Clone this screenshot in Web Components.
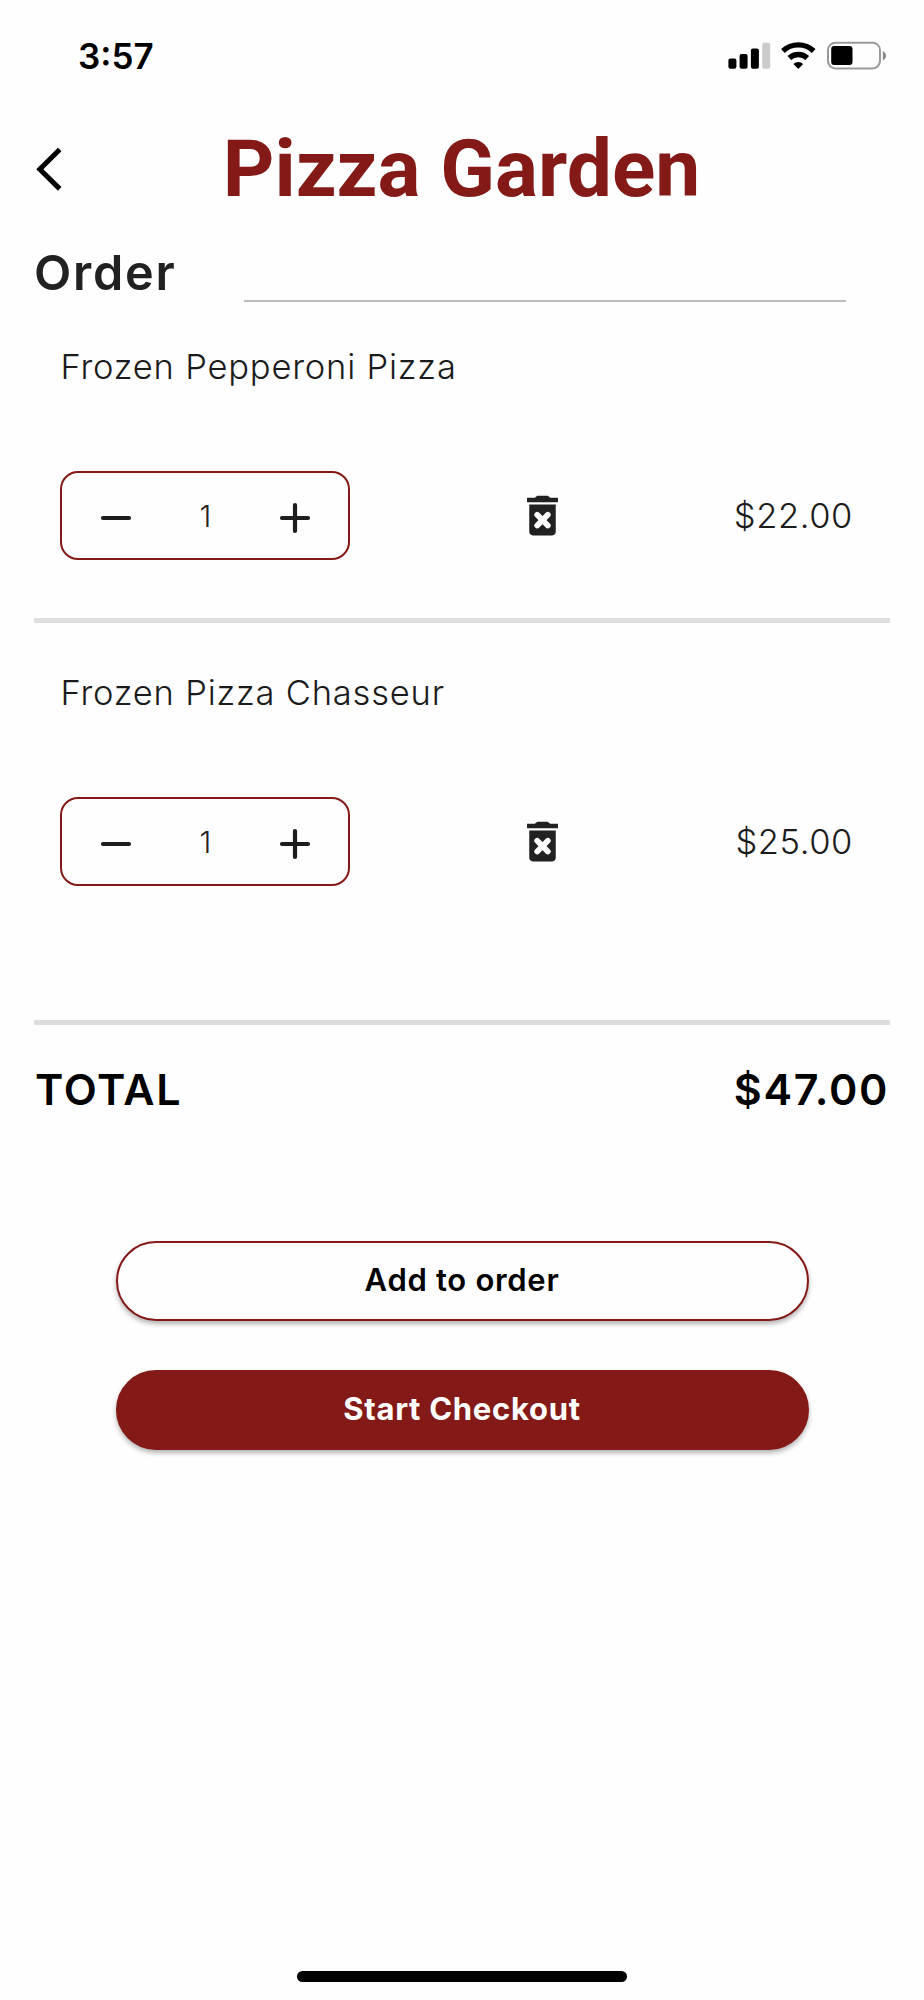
<!DOCTYPE html>
<html lang="en">
<head>
<meta charset="UTF-8">
<title>Pizza Garden</title>
<style>
  body { margin: 0; background: #fefefe; }
</style>
</head>
<body>
<order-screen></order-screen>
<script>
class StatusBar extends HTMLElement {
  constructor() {
    super();
    this.attachShadow({ mode: "open" });
  }

  connectedCallback() {
    this.shadowRoot.innerHTML = `
      <style>
        :host {
          display: flex;
          justify-content: space-between;
          align-items: center;
          height: 112px;
          padding: 0 37px 0 78px;
          color: #000;
        }
        time { font-size: 35px; font-weight: 600; line-height: 40px; }
        svg { display: block; }
      </style>
      <time>${this.getAttribute("time")}</time>
      <svg width="160" height="32" viewBox="727 39.6 160 32">
        <rect x="728.4" y="58" width="8" height="10.3" rx="2"/>
        <rect x="739.6" y="53.7" width="8" height="14.6" rx="2"/>
        <rect x="750.9" y="48" width="8" height="20.3" rx="2"/>
        <rect x="762.2" y="42.4" width="8" height="25.9" rx="2" fill="#cbcbcb"/>
        <g fill="none" stroke="#000" stroke-width="5.4">
          <path d="M782.9 50.6a22.5 22.5 0 0 1 30.8 0"/>
          <path d="M789.3 57.6a13.2 13.2 0 0 1 18 0"/>
        </g>
        <path d="M798.3 68.6l-4.9-5a7.2 7.2 0 0 1 9.8 0z"/>
        <rect x="828" y="42.3" width="52" height="25.8" rx="7.5" fill="none" stroke="#999" stroke-width="2"/>
        <rect x="831.2" y="45.7" width="21.3" height="19" rx="3"/>
        <path d="M882.8 50.6c4.3 2 4.3 7.5 0 9.4z" fill="#8a8a8a"/>
      </svg>`;
  }
}
customElements.define("status-bar", StatusBar);

class AppHeader extends HTMLElement {
  constructor() {
    super();
    this.attachShadow({ mode: "open" });
  }

  connectedCallback() {
    this.shadowRoot.innerHTML = `
      <style>
        :host {
          display: grid;
          grid-template-columns: 60px 1fr 60px;
          align-items: center;
          height: 114px;
          padding: 0 21px 0 20px;
        }
        svg { display: block; margin-left: 15px; }
        h1 {
          margin: 0;
          font-family: Roboto, sans-serif;
          font-size: 80.3px;
          font-weight: 700;
          line-height: 90px;
          text-align: center;
          color: #841a17;
        }
      </style>
      <svg width="28" height="46" viewBox="0 0 28 46">
        <path d="M24.7 3.5L4.8 23.2L24.7 42.9" fill="none" stroke="#000" stroke-width="5"/>
      </svg>
      <h1><slot></slot></h1>`;
  }
}
customElements.define("app-header", AppHeader);

class SectionTitle extends HTMLElement {
  constructor() {
    super();
    this.attachShadow({ mode: "open" });
  }

  connectedCallback() {
    this.shadowRoot.innerHTML = `
      <style>
        :host {
          display: flex;
          align-items: flex-end;
          height: 76px;
          padding: 0 78px 0 34px;
        }
        h2 {
          width: 209.5px;
          margin: 0;
          font-size: 48.5px;
          font-weight: 600;
          line-height: 58px;
          letter-spacing: 1.75px;
          color: #212121;
        }
        .rule { flex: 1; height: 2px; background: #bdbdbd; }
      </style>
      <h2><slot></slot></h2>
      <div class="rule"></div>`;
  }
}
customElements.define("section-title", SectionTitle);

class QuantityStepper extends HTMLElement {
  constructor() {
    super();
    this.attachShadow({ mode: "open" });
  }

  connectedCallback() {
    this.shadowRoot.innerHTML = `
      <style>
        :host {
          display: flex;
          justify-content: space-between;
          align-items: center;
          box-sizing: border-box;
          width: 290px;
          height: 89px;
          padding: 0 36px 0 37px;
          border: 2px solid #841a17;
          border-radius: 18px;
        }
        svg { display: block; margin-top: 5px; }
        path { fill: none; stroke: #1d1d1d; stroke-width: 4.2; stroke-linecap: round; }
        span { font-size: 30px; font-weight: 300; line-height: 40px; color: #212121; }
      </style>
      <svg width="34" height="34" viewBox="0 0 34 34"><path d="M4 17h26"/></svg>
      <span>${this.getAttribute("value")}</span>
      <svg width="34" height="34" viewBox="0 0 34 34"><path d="M4 17h26M17 4v26"/></svg>`;
  }
}
customElements.define("quantity-stepper", QuantityStepper);

class OrderItem extends HTMLElement {
  constructor() {
    super();
    this.attachShadow({ mode: "open" });
  }

  connectedCallback() {
    const name = this.getAttribute("name");
    const price = this.getAttribute("price");
    const quantity = this.getAttribute("quantity") || "1";
    this.shadowRoot.innerHTML = `
      <style>
        :host {
          display: block;
          margin: 0 34px;
          padding: 50px 37px 58px 26px;
          border-bottom: 5px solid #dedede;
          font-weight: 300;
          color: #1b1b1b;
        }
        h3 {
          margin: 0 0 84px;
          padding-left: 0.5px;
          font-size: 34.5px;
          font-weight: 300;
          line-height: 40px;
          letter-spacing: 0.8px;
        }
        .row { display: grid; grid-template-columns: 290px 1fr auto; align-items: center; }
        .trash { display: block; margin-left: 166px; }
        .price { font-size: 34.5px; line-height: 40px; letter-spacing: 0.6px; }
      </style>
      <h3>${name}</h3>
      <div class="row">
        <quantity-stepper value="${quantity}"></quantity-stepper>
        <svg class="trash" width="53" height="53" viewBox="0 0 24 24" fill="#212121">
          <path d="M6 19.4c0 .9.7 1.6 1.6 1.6h8.8c.9 0 1.6-.7 1.6-1.6V7H6z"/>
          <path d="M5 4h3.5l1-.8c.2-.15.4-.2.7-.2h3.6c.3 0 .5.05.7.2l1 .8H19v2H5z"/>
          <path d="M9.6 11.7l4.8 4.8M14.4 11.7l-4.8 4.8" stroke="#fefefe" stroke-width="2.6" stroke-linecap="round"/>
        </svg>
        <span class="price">${price}</span>
      </div>`;
  }
}
customElements.define("order-item", OrderItem);

class OrderTotal extends HTMLElement {
  constructor() {
    super();
    this.attachShadow({ mode: "open" });
  }

  connectedCallback() {
    this.shadowRoot.innerHTML = `
      <style>
        :host {
          display: flex;
          justify-content: space-between;
          padding: 39px 35px 0;
          font-size: 43px;
          font-weight: 600;
          line-height: 50px;
          letter-spacing: 1.65px;
          color: #000;
        }
      </style>
      <span class="label">TOTAL</span>
      <span class="amount">${this.getAttribute("amount")}</span>`;
  }
}
customElements.define("order-total", OrderTotal);

class PillButton extends HTMLElement {
  constructor() {
    super();
    this.attachShadow({ mode: "open" });
  }

  connectedCallback() {
    this.shadowRoot.innerHTML = `
      <style>
        :host { display: block; }
        button {
          display: block;
          box-sizing: border-box;
          width: 100%;
          height: 80px;
          padding: 0 0 2px;
          border: 2px solid #841a17;
          border-radius: 40px;
          background: #fefefe;
          box-shadow: 0 3px 5px rgba(0, 0, 0, 0.3);
          font: 600 31px/40px Inter, sans-serif;
          letter-spacing: 0.7px;
          color: #000;
        }
        :host([primary]) button { background: #841a17; font-weight: 700; color: #fff; }
      </style>
      <button><slot></slot></button>`;
  }
}
customElements.define("pill-button", PillButton);

class OrderScreen extends HTMLElement {
  constructor() {
    super();
    this.attachShadow({ mode: "open" });
  }

  connectedCallback() {
    this.shadowRoot.innerHTML = `
      <style>
        :host {
          display: flex;
          flex-direction: column;
          box-sizing: border-box;
          width: 924px;
          height: 2000px;
          padding-bottom: 18px;
          font-family: Inter, "Liberation Sans", sans-serif;
        }
        .items { padding-top: 45px; }
        order-item:first-child { padding-top: 0; }
        order-item:last-child { padding-bottom: 134px; }
        .actions {
          display: grid;
          gap: 49px;
          margin: 127px 115.5px 0;
        }
        .home { width: 330px; height: 11px; margin: auto auto 0; border-radius: 6px; background: #000; }
      </style>
      <status-bar time="3:57"></status-bar>
      <app-header>Pizza Garden</app-header>
      <section-title>Order</section-title>
      <div class="items">
        <order-item name="Frozen Pepperoni Pizza" price="$22.00"></order-item>
        <order-item name="Frozen Pizza Chasseur" price="$25.00"></order-item>
      </div>
      <order-total amount="$47.00"></order-total>
      <div class="actions">
        <pill-button>Add to order</pill-button>
        <pill-button primary>Start Checkout</pill-button>
      </div>
      <div class="home"></div>`;
  }
}
customElements.define("order-screen", OrderScreen);
</script>
</body>
</html>
